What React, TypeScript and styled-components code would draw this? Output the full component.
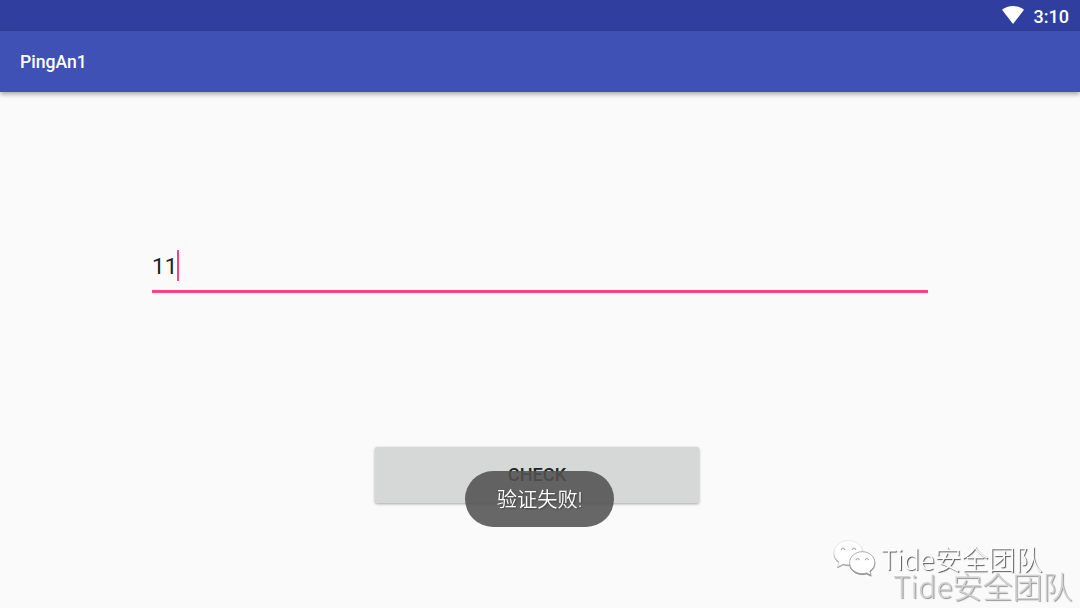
import { useState } from 'react';
import styled, { createGlobalStyle } from 'styled-components';

const GlobalStyle = createGlobalStyle`
  * {
    box-sizing: border-box;
  }

  body {
    margin: 0;
    background: #fafafa;
    font-family: Roboto, 'Noto Sans CJK SC', sans-serif;
  }
`;

const Screen = styled.div`
  position: relative;
  display: flex;
  flex-direction: column;
  height: 608px;
  overflow: hidden;
  background: #fafafa;
`;

const StatusBar = styled.div`
  display: flex;
  align-items: center;
  justify-content: flex-end;
  gap: 10px;
  height: 31px;
  padding: 2px 11px 0 0;
  background: #303f9f;
  color: #fff;
`;

const Clock = styled.span`
  font-size: 18px;
  font-weight: 500;
  line-height: 29px;
`;

const WifiIcon = styled.svg`
  width: 22px;
  height: 18px;
  margin-top: -3px;
`;

const AppBar = styled.header`
  display: flex;
  align-items: center;
  height: 61px;
  padding: 1px 20px 0;
  background: #3f51b5;
  box-shadow: 0 2px 5px rgba(0, 0, 0, 0.36);
`;

const Title = styled.h1`
  margin: 0;
  color: #fff;
  font-size: 17.6px;
  font-weight: 500;
`;

const Content = styled.main`
  display: flex;
  flex-direction: column;
  padding: 157px 152px 0;
`;

const Field = styled.div`
  display: flex;
  align-items: center;
  height: 44px;
  padding-bottom: 8px;
  border-bottom: 3px solid #ff4081;
`;

const FieldText = styled.span`
  padding-top: 2px;
  color: #212121;
  font-size: 22.5px;
  line-height: 31px;
`;

const Caret = styled.span`
  width: 2px;
  height: 31px;
  background: #ff4081;
`;

const CheckButton = styled.button`
  width: 324px;
  height: 56px;
  margin: 154px 0 0 223px;
  padding: 0 0 2px;
  border: 0;
  border-radius: 2px;
  background: #d6d7d7;
  box-shadow: 0 1px 3px rgba(0, 0, 0, 0.35);
  color: #212121;
  font-family: inherit;
  font-size: 18.2px;
  font-weight: 500;
  text-transform: uppercase;
`;

const Toast = styled.div`
  position: absolute;
  top: 471px;
  left: 465px;
  display: flex;
  align-items: center;
  justify-content: center;
  width: 149px;
  height: 56px;
  padding-bottom: 2px;
  border-radius: 28px;
  background: rgba(82, 82, 82, 0.88);
  color: #fff;
  font-size: 20.3px;
  font-weight: 350;
  text-shadow: 1px 1px 2px rgba(0, 0, 0, 0.4);
  will-change: transform;
`;

const Account = styled.div`
  position: absolute;
  top: 539px;
  left: 832px;
  display: flex;
  gap: 4px;
  will-change: transform;
`;

const WechatIcon = styled.svg`
  width: 45px;
  height: 40px;
  filter: drop-shadow(0.7px 1px 0.6px rgba(0, 0, 0, 0.45));
`;

const Mark = styled.span<{ $size: number; $faded?: boolean }>`
  color: ${({ $faded }) => ($faded ? '#d2d2d2' : '#fff')};
  font-family: 'Noto Sans CJK SC', sans-serif;
  font-size: ${({ $size }) => $size}px;
  font-weight: 300;
  line-height: 40px;
  white-space: nowrap;
  text-shadow: 1px 1px 1px
    ${({ $faded }) => ($faded ? 'rgba(0, 0, 0, 0.42)' : 'rgba(0, 0, 0, 0.68)')};
`;

const Corner = styled.div`
  position: absolute;
  right: 7px;
  bottom: 3px;
  will-change: transform;
`;

const App = () => {
  const [value] = useState<string>('11');

  return (
    <>
      <GlobalStyle />
      <Screen>
        <StatusBar>
          <WifiIcon viewBox='0 0 22 18'>
            <path d='M11 18 0 3.8C3 1.3 6.8 0 11 0s8 1.3 11 3.8Z' fill='#fff' />
          </WifiIcon>
          <Clock>3:10</Clock>
        </StatusBar>
        <AppBar>
          <Title>PingAn1</Title>
        </AppBar>
        <Content>
          <Field>
            <FieldText>{value}</FieldText>
            <Caret />
          </Field>
          <CheckButton>Check</CheckButton>
        </Content>
        <Toast>验证失败!</Toast>
        <Account>
          <WechatIcon viewBox='0 0 45 40'>
            <path
              d='M16.500 1.500C8.500 1.500 2 7 2 13.800c0 3.800 2 7.100 5.200 9.300L5.500 28l5.600-3c1.700.5 3.500.8 5.400.8C24.500 25.800 31 20.500 31 13.800S24.500 1.500 16.500 1.500Z'
              fill='#fff'
              stroke='#ccc'
              strokeWidth='0.4'
            />
            <g fill='#f6f6f6' stroke='#999' strokeWidth='0.9'>
              <path d='M9.200 11a1.800 1.900 0 1 1 3.600 0' />
              <path d='M20.200 11a1.800 1.900 0 1 1 3.600 0' />
            </g>
            <path
              d='M30.300 12.700c-7 0-12.700 4.900-12.700 11S23.300 34.600 30.300 34.600c1.500 0 3-.2 4.300-.7l4.500 2.300-1.200-4.100c3-2 4.900-5 4.900-8.400 0-6.100-5.500-11-12.500-11Z'
              fill='#fff'
              stroke='#999'
              strokeWidth='0.8'
            />
            <g fill='#f6f6f6' stroke='#999' strokeWidth='0.9'>
              <path d='M24.100 21.200a1.600 1.700 0 1 1 3.200 0' />
              <path d='M33.300 21.200a1.600 1.700 0 1 1 3.200 0' />
            </g>
          </WechatIcon>
          <Mark $size={27}>Tide安全团队</Mark>
        </Account>
        <Corner>
          <Mark $size={30} $faded>
            Tide安全团队
          </Mark>
        </Corner>
      </Screen>
    </>
  );
};

export default App;
